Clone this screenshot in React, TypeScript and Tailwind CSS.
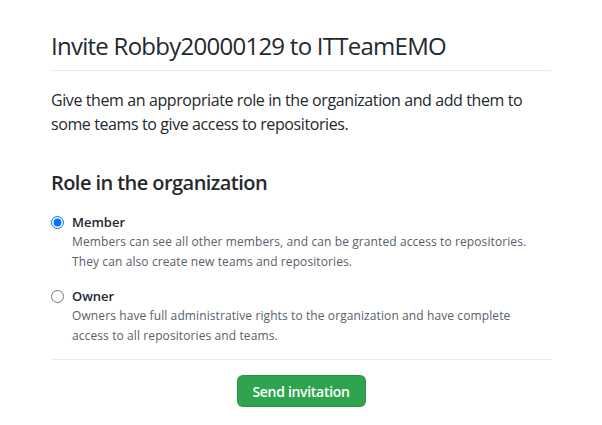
import React from "react";

export default function App() {
  return (
    <div className="min-h-[425px] bg-white font-['Open_Sans',sans-serif] text-[#24292e]">
      <div className="mx-auto w-[500px]">
        <div className="border-b border-[#e8eaed] pt-[28px] pb-[6px]">
          <h1 className="text-[24px] leading-[36px] font-normal tracking-[-0.74px]">
            Invite Robby20000129 to ITTeamEMO
          </h1>
        </div>
        <p className="mt-[17px] text-[16px] leading-[24px] tracking-[-0.4px]">
          Give them an appropriate role in the organization and add them to some teams to give access to repositories.
        </p>
        <h2 className="mt-[32px] text-[20px] leading-[30px] font-semibold tracking-[-0.56px]">
          Role in the organization
        </h2>

        <div className="border-b border-[#e8eaed] pb-[13px]">
          <label className="mt-[14px] flex items-center">
            <input
              type="radio"
              name="role"
              defaultChecked
              className="m-0 h-[13px] w-[13px] accent-[#0075ff]"
            />
            <span className="ml-[8px] text-[13px] leading-[20px] font-semibold">Member</span>
          </label>
          <p className="pl-[21px] text-[12px] leading-[20px] text-[#586069] tracking-[0.1px]">
            Members can see all other members, and can be granted access to repositories.
            <br />
            They can also create new teams and repositories.
          </p>

          <label className="mt-[14px] flex items-center">
            <input type="radio" name="role" className="m-0 h-[13px] w-[13px] accent-[#0075ff]" />
            <span className="ml-[8px] text-[13px] leading-[20px] font-semibold">Owner</span>
          </label>
          <p className="pl-[21px] text-[12px] leading-[20px] text-[#586069] tracking-[0.1px]">
            Owners have full administrative rights to the organization and have complete
            <br />
            access to all repositories and teams.
          </p>
        </div>

        <div className="mt-[15px] flex justify-center">
          <button
            type="button"
            className="flex h-[32px] w-[129px] items-center justify-center rounded-[6px] border border-[rgba(27,31,35,0.15)] bg-[#2ea44f] text-[14px] font-semibold text-white tracking-[-0.3px]"
          >
            Send invitation
          </button>
        </div>
      </div>
    </div>
  );
}
